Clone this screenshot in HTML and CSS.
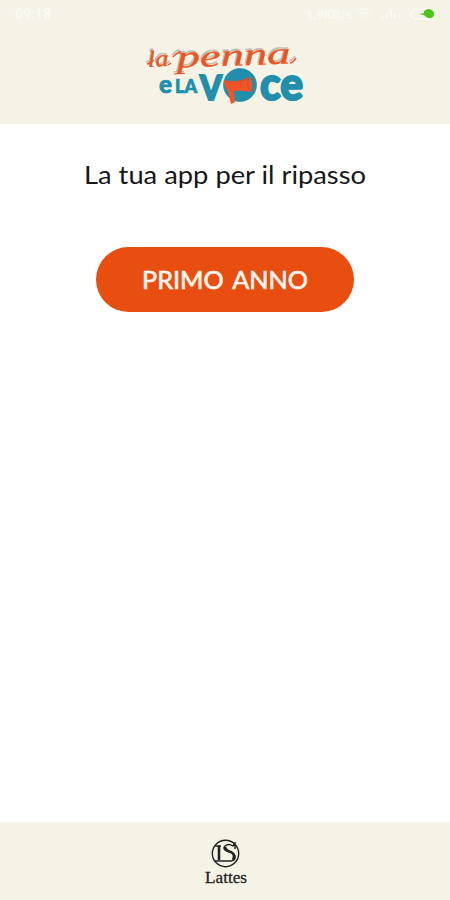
FILE: index.html
```
<!DOCTYPE html>
<html lang="it">
<head>
<meta charset="utf-8">
<title>La penna e la voce</title>
<link rel="stylesheet" href="styles.css">
</head>
<body>
<div class="app">
  <header class="header">
    <div class="status">
      <span class="time">09:18</span>
      <span class="network">1,9KB/s</span>
      <svg class="signals" width="82" height="18" viewBox="0 0 82 18">
        <path class="faint" d="M1 6q7-5 14 0M4 9q4-3 8 0M7 12h2M28 13v-3M32 13V8M36 13V5M40 13V9M44 13v-4"/>
        <rect class="faint" x="56" y="4" width="22" height="10" rx="5"/>
        <path class="charge" d="M64 9l5-1v-2q5-4 9 0 2 3 0 6-4 3-8-1l-1-1z"/>
      </svg>
    </div>
    <svg class="logo" width="164" height="64" viewBox="144 44 164 64" role="img">
      <g class="script">
        <text x="148" y="67" font-size="23" textLength="21" lengthAdjust="spacingAndGlyphs" transform="rotate(-3 148 67)">la</text>
        <text x="177" y="67.5" font-size="31" textLength="114" lengthAdjust="spacingAndGlyphs" transform="rotate(-2 177 67.5)">penna</text>
        <path class="stroke" d="M147 64q4-1 7-4M173 57q4-5 8-5M168 65l3-2M290 63q4-1 6-5"/>
      </g>
      <g class="block">
        <text x="159" y="93" font-size="24" textLength="13" lengthAdjust="spacingAndGlyphs">e</text>
        <text x="175" y="93" font-size="19" textLength="22" lengthAdjust="spacingAndGlyphs">LA</text>
        <text class="initial" x="200" y="99.5" font-size="34" textLength="22" lengthAdjust="spacingAndGlyphs">V</text>
        <circle cx="240" cy="85" r="16.5"/>
        <text class="initial" x="260" y="100" font-size="46" textLength="43" lengthAdjust="spacingAndGlyphs">ce</text>
      </g>
      <path class="horn" d="M224 80q13 3 26-3 4 8 1 15-8-2-17-1l1 11-4 2-3-13q-4-5-4-11z"/>
      <path class="horn-line" d="M225 82q12 1 25-3M249 78q-3 7 1 13M252 78l3 3M253 84h3M252 91l3-2"/>
    </svg>
  </header>
  <main class="content">
    <svg class="heading" width="290" height="40" viewBox="80 155 290 40">
      <text x="84" y="183.5" textLength="282" lengthAdjust="spacingAndGlyphs">La tua app per il ripasso</text>
    </svg>
    <button class="button" type="button">
      <svg width="180" height="36" viewBox="135 262 180 36">
        <text x="142" y="288.5" textLength="166" lengthAdjust="spacingAndGlyphs">PRIMO ANNO</text>
      </svg>
    </button>
  </main>
  <footer class="footer">
    <svg width="50" height="54" viewBox="200 836 50 54">
      <g class="emblem">
        <circle cx="225.5" cy="853.5" r="13.2"/>
        <path class="thick" d="M219 846v14"/>
        <path d="M215 846h6M215 861h16q5-1 4-5-1-4-8-5-5-2-2-5 3-3 8 0l2-3M235 842v7"/>
        <path class="thick" d="M225 847q1 4 6 5 5 3 2 8"/>
      </g>
      <text x="205" y="883" textLength="42" lengthAdjust="spacingAndGlyphs">Lattes</text>
    </svg>
  </footer>
</div>
</body>
</html>
```
FILE: styles.css
```
* { box-sizing: border-box; }
body { margin: 0; font-family: Lato, sans-serif; }
svg { display: block; overflow: visible; }
.app { display: flex; flex-direction: column; height: 900px; background: #fff; }
.header { height: 124px; background: #f5f3e6; }
.status { display: flex; align-items: center; height: 28px; padding: 0 13px 0 15px; color: #fbfaf2; font: bold 13px Roboto, sans-serif; }
.time { margin-right: auto; font-size: 14px; }
.network { font-size: 13px; margin-right: 3px; }
.faint { fill: none; stroke: #fbfaf2; stroke-width: 1.5; }
.charge { fill: #4bc51e; }
.logo { margin: 16px 0 0 144px; }
.script { fill: #ed5423; stroke: #ed5423; stroke-width: .3; font-family: "Liberation Serif", serif; font-style: italic; filter: drop-shadow(-1px -1.5px .5px #c2bab0); }
.stroke { fill: none; stroke-width: 1.5; }
.block { fill: #218fac; stroke: #218fac; stroke-width: .7; font-family: Lato, sans-serif; font-weight: 900; }
.initial { stroke-width: 2; }
.horn { fill: #f15427; }
.horn-line { fill: none; stroke: #b7513a; stroke-width: .8; }
.content { flex: 1; display: flex; flex-direction: column; align-items: center; padding-top: 31px; }
.heading { fill: #171717; font-size: 25px; }
.button { width: 258px; height: 65px; margin-top: 52px; padding: 0; border: 0; border-radius: 33px; background: #e84e10; display: flex; align-items: center; justify-content: center; }
.button text { fill: #fff5ec; stroke: #fff5ec; stroke-width: .7; font: 25.5px Lato, sans-serif; word-spacing: 3px; }
.footer { height: 78px; background: #f5f3e6; display: flex; justify-content: center; padding-top: 14px; }
.footer text { fill: #242424; font: 17px "Liberation Serif", serif; stroke: #242424; stroke-width: .3; }
.emblem { fill: none; stroke: #222; stroke-width: 1.4; }
.thick { stroke-width: 2.6; }
```
